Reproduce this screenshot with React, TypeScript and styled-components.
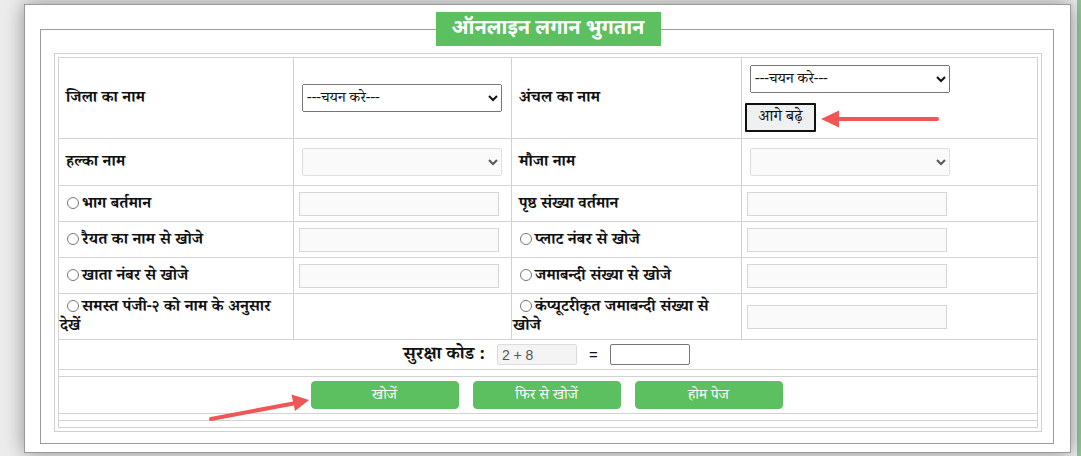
import React from "react";
import styled, { createGlobalStyle } from "styled-components";

const GlobalStyle = createGlobalStyle`
  html, body {
    margin: 0;
    padding: 0;
  }
  body {
    background: #ececec;
    font-family: "Noto Serif Devanagari", "FreeSerif", "Lohit Devanagari", "Noto Sans Devanagari", "Liberation Serif", serif;
    color: #111;
  }
`;

const Page = styled.div`
  position: relative;
  box-sizing: border-box;
  width: 1081px;
  height: 456px;
  overflow: hidden;
  padding: 4px 0 0 24px;
  background: linear-gradient(to right, transparent 1077px, #8cc796 1077px), #ececec;
`;

const Window = styled.div`
  box-sizing: border-box;
  width: 1047px;
  height: 449px;
  background: #fff;
  border: 1px solid #9a9a9a;
  box-shadow: 0 0 18px rgba(0, 0, 0, 0.4);
  padding: 7px 16px 0 15px;
`;

const Frame = styled.fieldset`
  box-sizing: border-box;
  width: 1014px;
  min-width: 0;
  margin: 0;
  border: 1px solid #9c9c9c;
  padding: 7px 11px 11px 13px;
`;

const Legend = styled.legend`
  box-sizing: border-box;
  width: 225px;
  height: 34px;
  margin: 0 auto;
  padding: 0;
  background: #5cbf60;
  color: #fff;
  font-family: "Noto Sans Devanagari", "Lohit Devanagari", sans-serif;
  font-size: 20px;
  font-weight: 700;
  line-height: 34px;
  text-align: center;
`;

const Board = styled.div`
  border: 1px solid #cfcfcf;
  padding: 3px;
`;

const Grid = styled.div`
  display: grid;
  grid-template-columns: 234px 217px 229px 295px;
  grid-template-rows: 80px 46px 35px 35px 35px 45px 29px 6px 36px 6px 6px;
  gap: 1px;
  padding: 1px;
  background: #d2d2d2;
`;

const Cell = styled.div<{ $span?: boolean; $pad?: number; $gap?: number }>`
  grid-column: ${(p) => (p.$span ? "1 / -1" : "auto")};
  display: flex;
  align-items: center;
  justify-content: ${(p) => (p.$span ? "center" : "flex-start")};
  gap: ${(p) => p.$gap ?? 0}px;
  min-width: 0;
  padding: 0 4px 0 ${(p) => p.$pad ?? 1}px;
  background: #fff;
`;

const Stack = styled.div`
  display: flex;
  flex-direction: column;
  align-items: flex-start;
  gap: 10px;
`;

const Label = styled.label<{ $indent?: number }>`
  display: block;
  padding-top: 3px;
  text-indent: ${(p) => p.$indent ?? 6}px;
  font-size: 16px;
  font-weight: 700;
  line-height: 19px;
`;

const Radio = styled.input.attrs({ type: "radio" })`
  width: 12px;
  height: 12px;
  margin: 0 3px 0 5px;
  vertical-align: -1px;
`;

const Select = styled.select`
  box-sizing: border-box;
  width: 200px;
  height: 28px;
  padding-top: 2px;
  font-family: inherit;
  font-size: 15px;
  color: #111;
`;

const Field = styled.input`
  box-sizing: border-box;
  width: 200px;
  height: 24px;
  border: 1px solid #d6d6d6;
  background: #fafafa;
`;

const NextButton = styled.button`
  box-sizing: border-box;
  width: 71px;
  height: 29px;
  padding: 4px 0 0;
  border: 2px solid #111;
  border-radius: 1px;
  background: #eff0f1;
  font-family: inherit;
  font-size: 16px;
  line-height: 20px;
  color: #111;
`;

const Captcha = styled.span`
  padding-top: 3px;
  font-size: 18px;
  font-weight: 700;
`;

const CodeBox = styled.input<{ $filled?: boolean }>`
  box-sizing: border-box;
  width: 80px;
  height: 21px;
  padding: 0 4px;
  border: 1px solid ${(p) => (p.$filled ? "#dcdcdc" : "#767676")};
  border-radius: 2px;
  background: ${(p) => (p.$filled ? "#f4f4f4" : "#fff")};
  font-family: "Liberation Sans", Arial, sans-serif;
  font-size: 14px;
  color: #555;
`;

const Equals = styled.span`
  font-family: "Liberation Sans", Arial, sans-serif;
  font-size: 15px;
`;

const GreenButton = styled.button`
  appearance: none;
  box-sizing: border-box;
  width: 148px;
  height: 28px;
  padding: 4px 0 0;
  border: 1px solid #5cbf60;
  outline: none;
  border-radius: 4px;
  background: #5cbf60;
  color: #fff;
  font-family: inherit;
  font-size: 15px;
  line-height: 20px;
`;

const Arrows = styled.svg`
  position: absolute;
  left: 0;
  top: 0;
  pointer-events: none;
`;

const ARROW = "#f05656";

export default function App() {
  return (
    <>
      <GlobalStyle />
      <Page>
        <Window>
          <Frame>
            <Legend>ऑनलाइन लगान भुगतान</Legend>
            <Board>
              <Grid>
                <Cell>
                  <Label>जिला का नाम</Label>
                </Cell>
                <Cell $pad={8}>
                  <Select defaultValue="">
                    <option value="">---चयन करे---</option>
                  </Select>
                </Cell>
                <Cell>
                  <Label>अंचल का नाम</Label>
                </Cell>
                <Cell $pad={3}>
                  <Stack>
                    <Select defaultValue="" style={{ marginLeft: 5 }}>
                      <option value="">---चयन करे---</option>
                    </Select>
                    <NextButton>आगे बढ़े</NextButton>
                  </Stack>
                </Cell>

                <Cell>
                  <Label>हल्का नाम</Label>
                </Cell>
                <Cell $pad={8}>
                  <Select disabled />
                </Cell>
                <Cell>
                  <Label>मौजा नाम</Label>
                </Cell>
                <Cell $pad={8}>
                  <Select disabled />
                </Cell>

                <Cell>
                  <Label $indent={2}>
                    <Radio name="mode" />
                    भाग बर्तमान
                  </Label>
                </Cell>
                <Cell $pad={5}>
                  <Field />
                </Cell>
                <Cell>
                  <Label>पृष्ठ संख्या वर्तमान</Label>
                </Cell>
                <Cell $pad={5}>
                  <Field />
                </Cell>

                <Cell>
                  <Label $indent={2}>
                    <Radio name="mode" />
                    रैयत का नाम से खोजे
                  </Label>
                </Cell>
                <Cell $pad={5}>
                  <Field />
                </Cell>
                <Cell>
                  <Label $indent={2}>
                    <Radio name="mode" />
                    प्लाट नंबर से खोजे
                  </Label>
                </Cell>
                <Cell $pad={5}>
                  <Field />
                </Cell>

                <Cell>
                  <Label $indent={2}>
                    <Radio name="mode" />
                    खाता नंबर से खोजे
                  </Label>
                </Cell>
                <Cell $pad={5}>
                  <Field />
                </Cell>
                <Cell>
                  <Label $indent={2}>
                    <Radio name="mode" />
                    जमाबन्दी संख्या से खोजे
                  </Label>
                </Cell>
                <Cell $pad={5}>
                  <Field />
                </Cell>

                <Cell>
                  <Label $indent={2}>
                    <Radio name="mode" />
                    समस्त पंजी-२ को नाम के अनुसार
                    <br />
                    देखें
                  </Label>
                </Cell>
                <Cell />
                <Cell>
                  <Label $indent={2}>
                    <Radio name="mode" />
                    कंप्यूटरीकृत जमाबन्दी संख्या से
                    <br />
                    खोजे
                  </Label>
                </Cell>
                <Cell $pad={5}>
                  <Field />
                </Cell>

                <Cell $span $gap={12}>
                  <Captcha>सुरक्षा कोड :</Captcha>
                  <CodeBox $filled readOnly value="2 + 8" />
                  <Equals>=</Equals>
                  <CodeBox />
                </Cell>
                <Cell $span />
                <Cell $span $gap={14}>
                  <GreenButton>खोजें</GreenButton>
                  <GreenButton>फिर से खोजें</GreenButton>
                  <GreenButton>होम पेज</GreenButton>
                </Cell>
                <Cell $span />
                <Cell $span />
              </Grid>
            </Board>
          </Frame>
        </Window>
        <Arrows width="1081" height="456" viewBox="0 0 1081 456">
          <line x1="937" y1="119" x2="834" y2="119" stroke={ARROW} strokeWidth="4" strokeLinecap="round" />
          <polygon points="821,119 839,110.5 839,127.5" fill={ARROW} />
          <line x1="211" y1="419" x2="296" y2="403" stroke={ARROW} strokeWidth="4" strokeLinecap="round" />
          <polygon points="309,400 291.5,394.5 295,411" fill={ARROW} />
        </Arrows>
      </Page>
    </>
  );
}
